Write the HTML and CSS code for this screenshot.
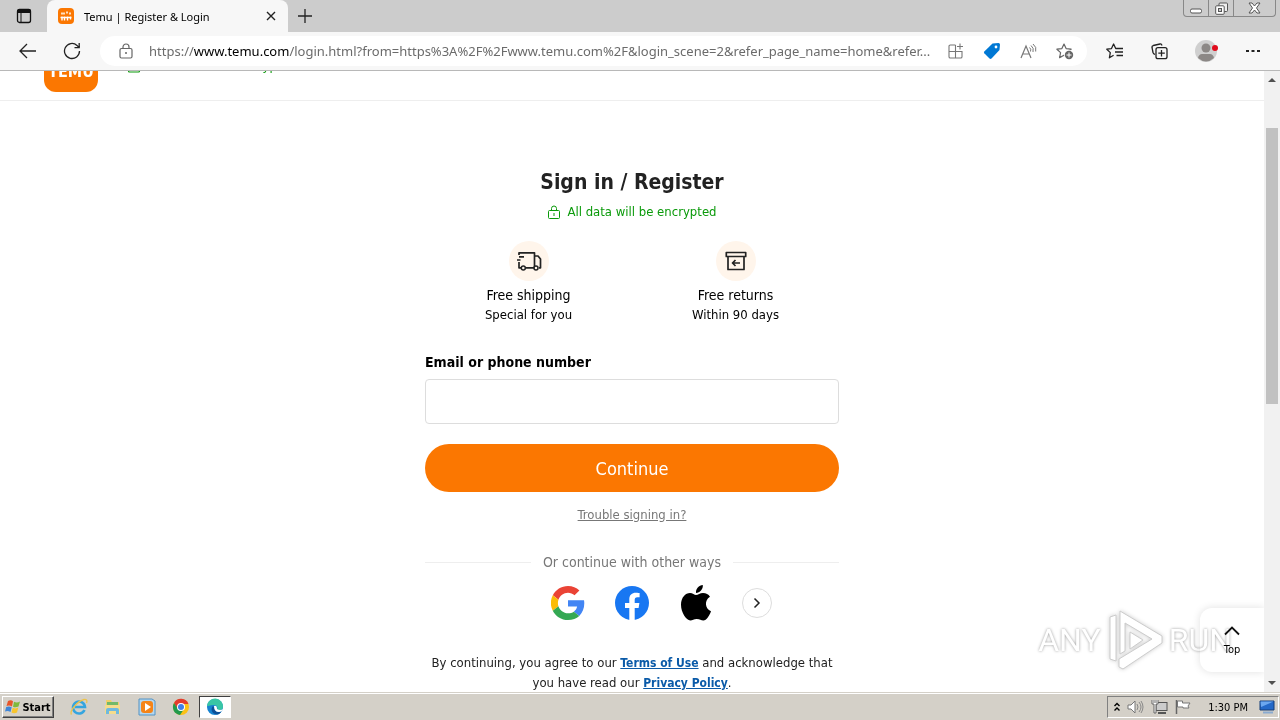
FILE: index.html
```html
<!DOCTYPE html>
<html lang="en">
<head>
    <meta charset="UTF-8">
    <meta name="viewport" content="width=device-width, initial-scale=1.0">
    <title>Temu | Register &amp; Login</title>
    <link rel="stylesheet" href="styles.css">
</head>
<body>
    <div class="tabs">
        <button class="tab-menu" aria-label="Tab actions">
            <svg width="16" height="16" viewBox="0 0 16 16"><rect x="1.5" y="1.5" width="13" height="13" rx="2" fill="none" stroke="#111" stroke-width="1.3"/><path d="M1 5V3a2 2 0 0 1 2-2h10a2 2 0 0 1 2 2v2z" fill="#111"/><path d="M5 5v9" stroke="#111"/></svg>
        </button>
        <div class="tab">
            <svg width="16" height="16" viewBox="0 0 16 16"><rect width="16" height="16" rx="4" fill="#fb7701"/><path d="M3 5.500h2m1-1v2m2-2h2m1 1h2" stroke="#ffe0c0" stroke-width="2"/><path d="M2.500 9.500h11M4 8.500v4m2.500-4v4m3-4v4m3-4v3" stroke="#fff" stroke-width="1.4"/></svg>
            <span class="tab-title">Temu | Register &amp; Login</span>
            <button aria-label="Close tab"><svg width="10" height="10" viewBox="0 0 10 10"><path d="M1 1l8 8M9 1L1 9" stroke="#222" stroke-width="1.4"/></svg></button>
        </div>
        <button class="new-tab" aria-label="New tab"><svg width="16" height="16" viewBox="0 0 16 16"><path d="M8 1v14M1 8h14" stroke="#222" stroke-width="1.3"/></svg></button>
        <div class="win-btns">
            <button aria-label="Minimize"><svg width="12" height="12" viewBox="0 0 12 12"><rect x=".5" y="7" width="11" height="4" rx="1.5" fill="#fff" stroke="#555"/></svg></button>
            <button aria-label="Restore"><svg width="13" height="13" viewBox="0 0 13 13"><rect x="4" y="1" width="8.5" height="8.5" rx="1" fill="#eee" stroke="#555"/><rect x=".7" y="3.8" width="8.5" height="8.5" rx="1" fill="#fff" stroke="#555"/><rect x="3.5" y="6.5" width="3" height="3" fill="#ccc" stroke="#555"/></svg></button>
            <button class="win-close" aria-label="Close"><svg width="13" height="12" viewBox="0 0 13 12"><path d="M1 1h3l2.500 3L9 1h3L8.500 6l3.500 5H9L6.500 8 4 11H1l3.500-5z" fill="#fff" stroke="#555"/></svg></button>
        </div>
    </div>

    <div class="toolbar">
        <button aria-label="Back"><svg width="18" height="16" viewBox="0 0 18 16"><path d="M17 8H1.500M8 1L1 8l7 7" fill="none" stroke="#222" stroke-width="1.3"/></svg></button>
        <button aria-label="Refresh"><svg width="18" height="18" viewBox="0 0 18 18"><path d="M16.500 9A7.500 7.500 0 1 1 14 3.400L16 5.500M16.200 1v4.700h-4.700" fill="none" stroke="#222" stroke-width="1.3"/></svg></button>
        <div class="address">
            <svg width="14" height="16" viewBox="0 0 14 16"><rect x="1" y="5.5" width="12" height="9.5" rx="1.5" fill="none" stroke="#666" stroke-width="1.2"/><path d="M4 5.500V4a3 3 0 0 1 6 0v1.500" fill="none" stroke="#666" stroke-width="1.2"/><circle cx="7" cy="10" r="1" fill="#666"/></svg>
            <div class="url">https://<b>www.temu.com</b>/login.html?from=https%3A%2F%2Fwww.temu.com%2F&amp;login_scene=2&amp;refer_page_name=home&amp;refer...</div>
            <div class="address-btns">
                <button aria-label="Apps"><svg width="16" height="16" viewBox="0 0 16 16"><path d="M7.500 2H2.300A1.300 1.300 0 0 0 1 3.300v10.400A1.300 1.300 0 0 0 2.300 15h10.400a1.300 1.300 0 0 0 1.300-1.300V8.500H1M7.500 2v13M12 .5v6M9 3.500h6" fill="none" stroke="#777" stroke-width="1.1"/></svg></button>
                <button aria-label="Coupons"><svg width="18" height="18" viewBox="0 0 18 18"><path d="M9.500 1.500L15.500 1Q17 1 17 2.500L16.500 8 8.500 16.500Q7.500 17.300 6.500 16.500L1.300 11.300Q.5 10.400 1.300 9.500z" fill="#0078d4"/><circle cx="13" cy="5" r="1.4" fill="#fff"/></svg></button>
                <button aria-label="Read aloud"><svg width="17" height="16" viewBox="0 0 17 16"><path d="M1 15L6 3l5 12M3 11h6" fill="none" stroke="#777" stroke-width="1.2"/><path d="M9.500 4.500q2 1.500 1 4M11 2.500q3.200 2.500 2 6.500M13 1q4 3 2.700 7.500" fill="none" stroke="#777"/></svg></button>
                <button aria-label="Add to favorites"><svg width="18" height="17" viewBox="0 0 18 17"><path d="M8 1l2.100 4.600 5 .6-3.700 3.400 1 5L8 12.200l-4.400 2.400 1-5L.9 6.200l5-.6z" fill="none" stroke="#666" stroke-width="1.2" stroke-linejoin="round"/><circle cx="13" cy="12" r="5" fill="#fff"/><circle cx="13" cy="12" r="4.200" fill="#666"/><path d="M13 9.500v5M10.500 12h5" stroke="#fff"/></svg></button>
            </div>
        </div>
        <div class="toolbar-btns">
            <button aria-label="Favorites"><svg width="18" height="16" viewBox="0 0 18 16"><path d="M11 5.500H9.700L7.600 1 5.500 5.600.8 6.200l3.500 3.400-.9 5.200 4.200-2.500M11 5.500h6M9 9h8M10.500 12.500H17" fill="none" stroke="#222" stroke-width="1.3" stroke-linejoin="round"/></svg></button>
            <button aria-label="Collections"><svg width="17" height="17" viewBox="0 0 17 17"><path d="M4 11.500Q2.500 11 2 9.500L1 4.500Q.8 3 2.300 2.500L9 1q1.500-.3 2 1.500" fill="none" stroke="#222" stroke-width="1.3"/><rect x="5" y="4.7" width="11" height="11" rx="2" fill="none" stroke="#222" stroke-width="1.3"/><path d="M10.500 7v6.500M7.300 10.200h6.500" stroke="#222" stroke-width="1.3"/></svg></button>
            <button aria-label="Profile"><svg width="24" height="24" viewBox="0 0 24 24"><circle cx="11" cy="12" r="11" fill="#cfcfcf"/><circle cx="11" cy="9" r="4.500" fill="#8c8886"/><path d="M3 19q1-4 4-4h8q3 0 4 4-8 7-16 0" fill="#8c8886"/><circle cx="20" cy="9" r="3" fill="#e00b1c"/></svg></button>
            <button aria-label="Settings and more"><svg width="14" height="4" viewBox="0 0 14 4"><path d="M0 1h3v2H0zM5.500 1h3v2h-3zM11 1h3v2h-3z" fill="#222"/></svg></button>
        </div>
    </div>

    <div class="viewport">
        <div class="page">
            <header class="page-head">
                <div class="logo">TEMU</div>
                <div class="encrypted">
                    <svg width="14" height="14" viewBox="0 0 14 14"><rect x="1.5" y="5" width="11" height="8" rx="1" fill="none" stroke="#0a9a0a" stroke-width="1.2"/></svg>
                    All data will be encrypted
                </div>
            </header>

            <main class="login">
                <h1>Sign in / Register</h1>
                <div class="encrypted">
                    <svg width="14" height="14" viewBox="0 0 14 14"><rect x="1.5" y="5.5" width="11" height="8" rx="1" fill="none" stroke="#0a9a0a"/><path d="M4.500 5.500V3.500a2.500 2.500 0 0 1 5 0v2M7 8v3" fill="none" stroke="#0a9a0a"/></svg>
                    All data will be encrypted
                </div>
                <div class="benefits">
                    <div class="benefit">
                        <div class="circle"><svg width="26" height="20" viewBox="0 0 26 20"><path d="M3 4V1.800h15.500v15H9.500M3 11v5.800h2M3 5.800h5M1 9h3.500M18.500 5h3.500l2.500 3v8.800h-1.500" fill="none" stroke="#222" stroke-width="1.7" stroke-linejoin="round"/><circle cx="7.3" cy="17" r="2" fill="#fff5eb" stroke="#222" stroke-width="1.5"/><circle cx="20" cy="17" r="2" fill="#fff5eb" stroke="#222" stroke-width="1.5"/></svg></div>
                        <h2>Free shipping</h2>
                        <p>Special for you</p>
                    </div>
                    <div class="benefit">
                        <div class="circle"><svg width="22" height="20" viewBox="0 0 22 20"><path d="M1.300 1.500h19.400v4H1.300zM3 5.500v13h16v-13M15 12H7.500M10.500 9L7.500 12l3 3" fill="none" stroke="#222" stroke-width="1.7" stroke-linejoin="round"/></svg></div>
                        <h2>Free returns</h2>
                        <p>Within 90 days</p>
                    </div>
                </div>

                <form class="login-form">
                    <label for="account">Email or phone number</label>
                    <input type="text" id="account">
                    <button type="button">Continue</button>
                </form>
                <a class="trouble" href="#">Trouble signing in?</a>

                <div class="other">Or continue with other ways</div>
                <div class="social">
                    <button aria-label="Google"><svg width="34" height="34" viewBox="0 0 48 48"><path fill="#ea4335" d="M24 9.500c3.500 0 6.700 1.200 9.200 3.600l6.900-6.900C35.900 2.400 30.500 0 24 0 14.600 0 6.500 5.400 2.600 13.200l8 6.200C12.400 13.700 17.700 9.500 24 9.500z"/><path fill="#4285f4" d="M47 24.500c0-1.600-.2-3.100-.4-4.500H24v9h12.900c-.6 3-2.200 5.500-4.700 7.200l7.700 6C44.400 38 47 31.800 47 24.500z"/><path fill="#fbbc05" d="M10.500 28.600a14.500 14.500 0 0 1 0-9.200l-8-6.200a24 24 0 0 0 0 21.600z"/><path fill="#34a853" d="M24 48c6.500 0 11.900-2.100 15.900-5.800l-7.700-6c-2.200 1.500-4.900 2.300-8.200 2.300-6.300 0-11.600-4.200-13.500-9.900l-8 6.200C6.500 42.600 14.600 48 24 48z"/></svg></button>
                    <button aria-label="Facebook"><svg width="34" height="34" viewBox="0 0 34 34"><circle cx="17" cy="17" r="17" fill="#1877f2"/><path d="M14.300 34V22h-4.300v-5h4.300v-3.700c0-4.300 2.600-6.600 6.500-6.600 1.900 0 3.800.3 3.800.3v4.200h-2.200c-2.100 0-2.700 1.300-2.700 2.600V17h4.700l-.8 5h-3.900v12z" fill="#fff"/></svg></button>
                    <button aria-label="Apple"><svg width="30" height="36" viewBox="0 0 30 36"><path d="M15 10c2 0 4-2 7-2 3 0 5.500 1.300 7 3.700-6 3.500-5 12 1 14.500-1.500 4.300-4.500 9.300-7.600 9.300-2.500 0-3.400-1.500-6.600-1.500s-4.200 1.500-6.500 1.500C5.300 35.500 0 27.500 0 19.800 0 12.500 4.500 8 9 8c2.600 0 4.500 2 6 2zM15 8c-.4-4 3-7.700 6.800-8 .5 4-3 8-6.800 8z"/></svg></button>
                    <button class="more" aria-label="More ways"><svg width="8" height="12" viewBox="0 0 8 12"><path d="M1.500 1.500L6 6l-4.500 4.500" fill="none" stroke="#222" stroke-width="1.5"/></svg></button>
                </div>
                <p class="terms">By continuing, you agree to our <a href="#">Terms of Use</a> and acknowledge that you have read our <a href="#">Privacy Policy</a>.</p>
            </main>

            <button class="top"><svg width="18" height="11" viewBox="0 0 18 11"><path d="M2 9.500L9 2.500l7 7" fill="none" stroke="#111" stroke-width="1.8"/></svg>Top</button>
            <div class="watermark">
                <span>ANY</span>
                <svg width="58" height="64" viewBox="0 0 58 64"><path d="M4 9l6-2v46l-6-2zM14 3l42 25v7L17 61l-4-2v-8l33-20-27-16v28l-5 3z" fill="#fff" stroke="#ccc"/><path d="M24 24v17l13-9z" fill="#fff" stroke="#ccc"/></svg>
                <span>RUN</span>
            </div>
        </div>
        <div class="scrollbar">
            <svg width="8" height="4" viewBox="0 0 8 4"><path d="M0 4l4-4 4 4z" fill="#505050"/></svg>
            <div class="thumb"></div>
            <svg width="8" height="4" viewBox="0 0 8 4"><path d="M0 0l4 4 4-4z" fill="#505050"/></svg>
        </div>
    </div>

    <div class="taskbar">
        <button class="start"><svg width="16" height="16" viewBox="0 0 16 16"><path d="M3 2q3-1.500 5 .3L7 7.500Q4.500 6 1.500 7z" fill="#e8562a"/><path d="M9 2.800q3 1.500 6-.3L13.500 7.500q-3 1.500-5.500.2z" fill="#7fb93c"/><path d="M1.200 8q3-1.200 5.500.3L5.500 13q-2.500-1.500-5.500-.5z" fill="#3f86d8"/><path d="M7.700 8.700q3 1.500 5.600-.1L12 13.500q-3 1.500-5.500 0z" fill="#f8c52c"/></svg>Start</button>
        <div class="apps">
            <button aria-label="Internet Explorer"><svg width="18" height="18" viewBox="0 0 18 18"><path d="M14.500 12a6 6 0 1 1 .5-3H5" fill="none" stroke="#35a5df" stroke-width="2.6"/><path d="M1.500 16.500C-1 13 8 3 14 1.500q4-.5 2.500 3.500" fill="none" stroke="#edc34b" stroke-width="1.3"/></svg></button>
            <button aria-label="Explorer"><svg width="18" height="18" viewBox="0 0 18 18"><path d="M2 2h5l1 2h7v5H2z" fill="#f1cf69"/><path d="M3 4h11v4H3z" fill="#72b968"/><path d="M1 7h15v9H1z" fill="#f5dc8c"/><path d="M2 16v-4q0-2 2-2h9q2 0 2 2v4h-3v-3H5v3z" fill="#6fb9df"/></svg></button>
            <button aria-label="Media Player"><svg width="18" height="18" viewBox="0 0 18 18"><path d="M1 1h13l3 2v14H1z" fill="#b5d7ef" stroke="#5393c4"/><rect x="3" y="3" width="12" height="12" rx="3" fill="#f58418"/><path d="M7 5l6 4-6 4z" fill="#fff"/></svg></button>
            <button aria-label="Chrome"><svg width="18" height="18" viewBox="0 0 18 18"><circle cx="9" cy="9" r="8" fill="#fbc116"/><path d="M2 5a8 8 0 0 1 14.500 1H9L5.500 11z" fill="#e33b2e"/><path d="M2 5a8 8 0 0 0 6 12l4-6H6z" fill="#229a4d"/><circle cx="9" cy="9" r="4" fill="#fff"/><circle cx="9" cy="9" r="3" fill="#3f7fe8"/></svg></button>
            <button class="current" aria-label="Edge"><svg width="18" height="18" viewBox="0 0 18 18"><circle cx="9" cy="9" r="8" fill="#1683d0"/><path d="M1 8A8 8 0 0 1 17 9c0 3-4 4-6 2.500 1.500-3-1-5-4-4.500S2 8 1 8z" fill="#39c6a5"/><path d="M7 8c-3 3-1 8 4 8.500q3-.5 4.500-3-6 2-6.500-2.500z" fill="#0b4f97"/><path d="M8 8q3-1 3 3 3 2 6 0-1 3-4 3-5 0-5-6z" fill="#fff"/></svg></button>
        </div>
        <div class="tray">
            <button aria-label="Show hidden icons"><svg width="6" height="10" viewBox="0 0 6 10"><path d="M.5 4L3 1.500 5.500 4M.5 8.500L3 6l2.500 2.500" fill="none" stroke="#000" stroke-width="1.4"/></svg></button>
            <svg width="17" height="16" viewBox="0 0 17 16"><path d="M1 6h3l4-4v12l-4-4H1z" fill="#fff" stroke="#777"/><path d="M10 5q2 3 0 6M12 3q4 5 0 10M14 2q4 6 0 12" fill="none" stroke="#888"/></svg>
            <svg width="17" height="16" viewBox="0 0 17 16"><rect x="5" y="3.5" width="11" height="8" fill="#ccc" stroke="#555"/><path d="M7 14h8" stroke="#555" stroke-width="2"/><path d="M1 1v4h2v9h2V5h2V1M3 1v3M5 1v3" fill="#fff" stroke="#666"/></svg>
            <svg width="16" height="16" viewBox="0 0 16 16"><path d="M1.500 1v14" stroke="#666" stroke-width="1.5"/><path d="M2.500 2h5v2h7.500l-2 3 1 2H8V8H2.500z" fill="#fff" stroke="#777"/></svg>
            <time>1:30 PM</time>
            <svg width="16" height="16" viewBox="0 0 16 16"><path d="M1 2h14v9H1z" fill="#2469c8" stroke="#153f79"/><path d="M1.500 2.500h13L2 8z" fill="#6ba7ef"/><path d="M4 13.500h10" stroke="#8aabd0" stroke-width="2"/></svg>
        </div>
    </div>
</body>
</html>
```
FILE: styles.css
```css
*{
    margin: 0;
    padding: 0;
    box-sizing: border-box;
}
body{
    height: 100vh;
    display: flex;
    flex-direction: column;
    overflow: hidden;
    background: #ffffff;
    font-family: "DejaVu Sans Condensed", "DejaVu Sans", sans-serif;
    font-size: 13px;
    color: #000000;
}
button{
    border: 0;
    background: none;
    font-family: inherit;
    color: inherit;
    display: flex;
    align-items: center;
    justify-content: center;
}
svg{
    display: block;
    flex-shrink: 0;
}

/* tabs */
.tabs{
    height: 32px;
    flex-shrink: 0;
    display: flex;
    background: #cccccc;
}
.tab-menu{
    width: 47px;
}
.tab{
    width: 241px;
    display: flex;
    align-items: center;
    gap: 10px;
    padding: 0 12px 0 11px;
    background: #f7f7f7;
    border-radius: 8px 8px 0 0;
    font-family: "Noto Sans", sans-serif;
    font-size: 11px;
}
.tab-title{
    flex: 1;
}
.new-tab{
    width: 34px;
}
.win-btns{
    display: flex;
    height: 17px;
    margin-left: auto;
    margin-right: 4px;
    border: 1px solid #888888;
    border-top: 0;
    border-radius: 0 0 4px 4px;
}
.win-btns button{
    width: 25px;
    border-right: 1px solid #888888;
}
.win-btns .win-close{
    width: 41px;
    border-right: 0;
}

/* toolbar */
.toolbar{
    height: 39px;
    flex-shrink: 0;
    display: flex;
    align-items: center;
    padding: 0 20px 0 19px;
    background: #f7f7f7;
    border-bottom: 1px solid #b8b8b8;
}
.toolbar>button{
    margin-right: 26px;
}
.toolbar>button + button{
    margin-right: 19px;
}
.address{
    flex: 1;
    min-width: 0;
    height: 30px;
    display: flex;
    align-items: center;
    gap: 16px;
    padding: 0 13px 0 19px;
    background: #ffffff;
    border-radius: 15px;
}
.url{
    flex: 1;
    min-width: 0;
    overflow: hidden;
    white-space: nowrap;
    font-family: "Noto Sans", sans-serif;
    font-size: 13px;
    color: #6b6b6b;
}
.url b{
    font-weight: normal;
    color: #000000;
}
.address-btns{
    display: flex;
    gap: 19px;
}
.toolbar-btns{
    display: flex;
    align-items: center;
    gap: 27px;
    margin-left: 19px;
}

/* page */
.viewport{
    flex: 1;
    min-height: 0;
    display: flex;
}
.page{
    flex: 1;
    position: relative;
    overflow: hidden;
}
.page-head{
    height: 30px;
    display: flex;
    align-items: flex-end;
    gap: 29px;
    padding: 0 44px 8px;
    overflow: hidden;
    border-bottom: 1px solid #eeeeee;
}
.logo{
    width: 54px;
    height: 54px;
    padding-top: 25px;
    background: #fb7701;
    border-radius: 12px;
    font-size: 16px;
    line-height: 18px;
    font-weight: bold;
    text-align: center;
    color: #ffffff;
}
.encrypted{
    display: flex;
    align-items: center;
    gap: 6px;
    font-size: 13px;
    line-height: 20px;
    color: #0a9a0a;
}
.page-head .encrypted{
    margin-bottom: 16px;
}
.login{
    max-width: 414px;
    margin: 0 auto;
    padding-top: 68px;
    display: flex;
    flex-direction: column;
    align-items: center;
}
h1{
    font-size: 21px;
    line-height: 26px;
    color: #222222;
}
.login .encrypted{
    margin-top: 7px;
}
.benefits{
    width: 100%;
    display: grid;
    grid-template-columns: 1fr 1fr;
    margin-top: 19px;
    text-align: center;
}
.circle{
    width: 40px;
    height: 40px;
    margin: 0 auto;
    display: flex;
    align-items: center;
    justify-content: center;
    border-radius: 50%;
    background: #fff5eb;
}
h2{
    margin-top: 4px;
    font-size: 14px;
    line-height: 20px;
    font-weight: normal;
}
.benefit p{
    font-size: 13px;
    line-height: 20px;
}
.login-form{
    width: 100%;
    margin-top: 27px;
}
.login-form label{
    display: block;
    font-size: 14px;
    line-height: 20px;
    font-weight: bold;
}
.login-form input{
    display: block;
    width: 100%;
    height: 45px;
    margin: 7px 0 20px;
    padding: 0 12px;
    border: 1px solid #dddddd;
    border-radius: 4px;
    font-size: 14px;
}
.login-form button{
    width: 100%;
    height: 48px;
    border-radius: 24px;
    background: #fb7701;
    font-size: 18px;
    color: #ffffff;
}
.trouble{
    margin-top: 13px;
    font-size: 13px;
    line-height: 20px;
    color: #777777;
}
.other{
    width: 100%;
    display: flex;
    align-items: center;
    gap: 12px;
    margin-top: 27px;
    font-size: 14px;
    line-height: 20px;
    color: #777777;
}
.other::before, .other::after{
    content: "";
    flex: 1;
    height: 1px;
    background: #eeeeee;
}
.social{
    display: flex;
    align-items: center;
    gap: 28px;
    margin-top: 13px;
    padding-left: 58px;
}
.social button{
    width: 36px;
}
.social .more{
    width: 30px;
    height: 30px;
    border: 1px solid #dddddd;
    border-radius: 50%;
}
.terms{
    margin-top: 32px;
    font-size: 13px;
    line-height: 19px;
    text-align: center;
    color: #222222;
}
.terms a{
    font-size: 12px;
    font-weight: bold;
    color: #0a5aa8;
}
.top{
    position: absolute;
    right: 0;
    bottom: 20px;
    width: 64px;
    height: 64px;
    flex-direction: column;
    gap: 7px;
    border-radius: 12px 0 0 12px;
    background: #ffffff;
    box-shadow: 0 0 8px #e0e0e0;
    font-size: 11px;
}
.watermark{
    position: absolute;
    right: 32px;
    bottom: 20px;
    display: flex;
    align-items: center;
    gap: 5px;
    mix-blend-mode: multiply;
    font-family: "Roboto", sans-serif;
    font-size: 32px;
    color: #ffffff;
    text-shadow: 0 0 3px #999999;
    pointer-events: none;
}
.watermark svg{
    filter: drop-shadow(0 0 2px #cccccc);
}
.scrollbar{
    width: 16px;
    display: flex;
    flex-direction: column;
    align-items: center;
    padding: 7px 0;
    background: #f1f1f1;
}
.thumb{
    width: 12px;
    height: 276px;
    margin: 46px 0 auto;
    background: #c1c1c1;
}

/* taskbar */
.taskbar{
    height: 28px;
    flex-shrink: 0;
    display: flex;
    align-items: center;
    padding: 1px 1px 0 2px;
    background: #d4d0c8;
    border-top: 1px solid #d4d0c8;
    box-shadow: inset 0 1px #ffffff;
}
.start{
    width: 52px;
    height: 22px;
    gap: 1px;
    border: 1px solid;
    border-color: #ffffff #404040 #404040 #ffffff;
    box-shadow: inset -1px -1px #808080;
    font-size: 11px;
    font-weight: bold;
}
.apps{
    display: flex;
    gap: 2px;
    margin-left: 9px;
}
.apps button{
    width: 32px;
    height: 22px;
}
.apps .current{
    border: 1px solid;
    border-color: #404040 #ffffff #ffffff #404040;
    background: #ffffff;
}
.tray{
    height: 22px;
    display: flex;
    align-items: center;
    gap: 7px;
    margin-left: auto;
    padding: 0 3px 0 6px;
    border: 1px solid;
    border-color: #808080 #ffffff #ffffff #808080;
}
.tray time{
    margin: 0 4px 0 10px;
    font-size: 11px;
}
```
